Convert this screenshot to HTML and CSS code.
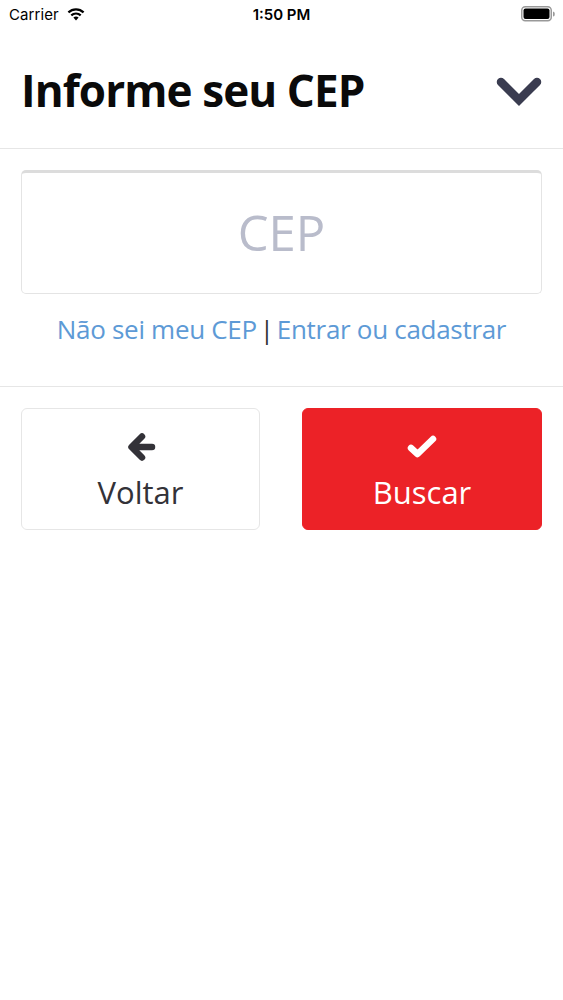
FILE: index.html
```html
<!DOCTYPE html>
<html lang="pt-BR">
<head>
<meta charset="utf-8">
<title>Informe seu CEP</title>
<link rel="stylesheet" href="styles.css">
</head>
<body>
<div class="screen">
  <div class="status">
    <div class="status-left">
      <span class="carrier">Carrier</span>
      <svg class="wifi" width="18" height="13" viewBox="0 0 18 13">
        <path d="M9 12.5 L11.6 9.6 A3.8 3.8 0 0 0 6.4 9.6 Z" fill="#000"/>
        <path d="M4.3 7.4 A6.8 6.8 0 0 1 13.7 7.4" stroke="#000" stroke-width="2.2" fill="none"/>
        <path d="M1.4 4.4 A11 11 0 0 1 16.6 4.4" stroke="#000" stroke-width="2.2" fill="none"/>
      </svg>
    </div>
    <div class="time">1:50 PM</div>
    <div class="status-right">
      <svg width="34" height="16" viewBox="0 0 34 16">
        <rect x="0.75" y="0.75" width="29.5" height="14" rx="3.5" fill="none" stroke="#999" stroke-width="1.5"/>
        <rect x="2.5" y="2.5" width="26" height="10.5" rx="2" fill="#000"/>
        <path d="M32 5.5 a1.8 2.5 0 0 1 0 5 z" fill="#999"/>
      </svg>
    </div>
  </div>

  <header class="header">
    <h1 class="title">Informe seu CEP</h1>
    <svg class="chevron" width="46" height="30" viewBox="0 0 46 30">
      <polyline points="5,5 23,23 41,5" fill="none" stroke="#3a3c50" stroke-width="8.5" stroke-linecap="round" stroke-linejoin="miter"/>
    </svg>
  </header>

  <section class="form">
    <input class="cep" type="text" placeholder="CEP">
    <p class="links"><a class="link">Não sei meu CEP</a><span class="sep">|</span><a class="link">Entrar ou cadastrar</a></p>
  </section>

  <section class="actions">
    <button class="btn btn-back">
      <svg width="30" height="30" viewBox="0 0 30 30">
        <path d="M26 15 H8 M16 4.5 L5.5 15 L16 25.5" fill="none" stroke="#333238" stroke-width="6.5" stroke-linecap="round" stroke-linejoin="round"/>
      </svg>
      <span>Voltar</span>
    </button>
    <button class="btn btn-go">
      <svg width="30" height="30" viewBox="0 0 30 30">
        <polyline points="4,16 10.5,22 26,7" fill="none" stroke="#fff" stroke-width="6.5" stroke-linecap="round" stroke-linejoin="round"/>
      </svg>
      <span>Buscar</span>
    </button>
  </section>
</div>
</body>
</html>
```

FILE: styles.css
```css
* { box-sizing: border-box; }
html, body { margin: 0; padding: 0; background: #fff; }
body { font-family: "Open Sans", "Noto Sans", sans-serif; }
.screen { width: 563px; }

.status {
  height: 28px;
  display: flex;
  align-items: center;
  justify-content: space-between;
  padding: 0 9px;
  font-family: Inter, "Liberation Sans", sans-serif;
  font-size: 15px;
  color: #000;
  position: relative;
}
.status-left { display: flex; align-items: center; gap: 8px; }
.carrier { letter-spacing: 0.1px; }
.time { font-weight: 600; position: absolute; left: 0; right: 0; text-align: center; pointer-events: none; }
.status-right { display: flex; align-items: center; margin-right: -1px; }

.header {
  height: 121px;
  display: flex;
  align-items: center;
  justify-content: space-between;
  padding: 0 22px 0 21px;
  border-bottom: 1px solid #e6e6e6;
}
.title {
  margin: 0;
  font-size: 44px;
  font-weight: 700;
  color: #0a0a0a;
  letter-spacing: -0.9px;
  line-height: 1;
  padding-top: 4px;
}
.chevron { margin-right: -1px; margin-top: 7px; }

.form {
  padding: 21px 21px 0;
  border-bottom: 1px solid #e6e6e6;
}
.cep {
  display: block;
  width: 100%;
  height: 124px;
  border: 1px solid #e4e4e4;
  border-top: 3px solid #dcdcdc;
  border-radius: 5px;
  background: #fff;
  text-align: center;
  font-family: "Open Sans", sans-serif;
  font-size: 49px;
  color: #555;
  outline: none;
  padding: 0 0 2px;
}
.cep::placeholder { color: #b9bccb; }
.links {
  margin: 0;
  height: 92px;
  display: flex;
  justify-content: center;
  align-items: center;
  font-size: 26px;
  padding-bottom: 22px;
  letter-spacing: -0.3px;
}
.link { color: #5d9ad6; text-decoration: none; }
.sep { color: #333; margin: 0 3px; }

.actions {
  display: grid;
  grid-template-columns: 239px 240px;
  justify-content: space-between;
  padding: 21px 21px 0;
}
.btn {
  height: 122px;
  border-radius: 6px;
  display: flex;
  flex-direction: column;
  align-items: center;
  justify-content: flex-start;
  gap: 13px;
  font-family: "Open Sans", sans-serif;
  font-size: 31px;
  padding: 23px 0 0;
  cursor: pointer;
}
.btn svg { display: block; flex: none; }
.btn span { line-height: 34px; display: block; }
.btn-back { background: #fff; border: 1px solid #e6e6e6; color: #333238; }
.btn-go { background: #ec2227; border: 1px solid #ec2227; color: #fff; }
```
